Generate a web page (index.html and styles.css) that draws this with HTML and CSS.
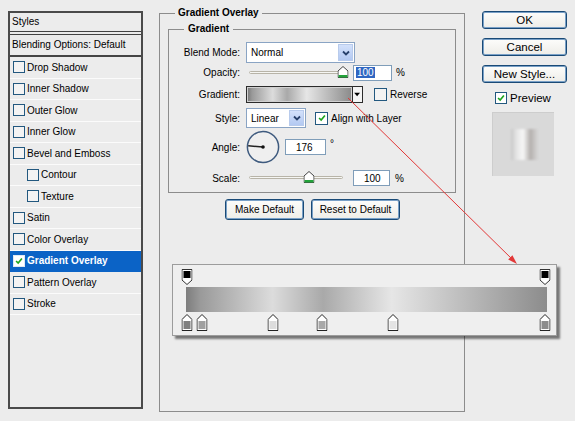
FILE: index.html
```html
<!DOCTYPE html>
<html>
<head>
<meta charset="utf-8">
<link rel="stylesheet" href="styles.css">
</head>
<body>
<div class="dialog">
  <aside class="styles-panel">
    <div class="panel-head">Styles</div>
    <div class="panel-blend">Blending Options: Default</div>
    <ul class="fx-list">
      <li class="fx"><span class="cb"></span>Drop Shadow</li>
      <li class="fx"><span class="cb"></span>Inner Shadow</li>
      <li class="fx"><span class="cb"></span>Outer Glow</li>
      <li class="fx"><span class="cb"></span>Inner Glow</li>
      <li class="fx"><span class="cb"></span>Bevel and Emboss</li>
      <li class="fx sub"><span class="cb"></span>Contour</li>
      <li class="fx sub"><span class="cb"></span>Texture</li>
      <li class="fx"><span class="cb"></span>Satin</li>
      <li class="fx"><span class="cb"></span>Color Overlay</li>
      <li class="fx active"><span class="cb checked"><svg viewBox="0 0 12 12" width="12" height="12"><path d="M2.5 6 L5 8.5 L9.5 3" fill="none" stroke="#1fa51f" stroke-width="2"/></svg></span>Gradient Overlay</li>
      <li class="fx"><span class="cb"></span>Pattern Overlay</li>
      <li class="fx"><span class="cb"></span>Stroke</li>
    </ul>
  </aside>

  <main class="settings">
    <fieldset class="group outer">
      <legend>Gradient Overlay</legend>
      <fieldset class="group inner">
        <legend>Gradient</legend>
        <div class="row r-blend">
          <span class="lbl">Blend Mode:</span>
          <div class="select w-blend"><span>Normal</span><span class="dd"><svg viewBox="0 0 10 10" width="10" height="10"><path d="M2 3.5 L5 6.5 L8 3.5" fill="none" stroke="#27406b" stroke-width="1.8"/></svg></span></div>
        </div>
        <div class="row r-opacity">
          <span class="lbl">Opacity:</span>
          <div class="slider"><span class="track"></span><span class="thumb" style="left:97px"><svg viewBox="0 0 11 12" width="11" height="12"><path d="M0.5 5 L5.5 0.5 L10.5 5 V11.5 H0.5 Z" fill="#fff" stroke="#444"/><rect x="1" y="9" width="9" height="2.5" fill="#22a33a"/></svg></span></div>
          <div class="num w-op"><span class="sel">100</span></div>
          <span class="unit">%</span>
        </div>
        <div class="row r-grad">
          <span class="lbl">Gradient:</span>
          <div class="grad-swatch"><span class="grad-fill"></span></div>
          <span class="grad-dd"><svg viewBox="0 0 8 6" width="7" height="5"><path d="M0 1 H7 L3.5 5 Z" fill="#000"/></svg></span>
          <span class="cb big rev"></span><span class="cb-label">Reverse</span>
        </div>
        <div class="row r-style">
          <span class="lbl">Style:</span>
          <div class="select w-style"><span>Linear</span><span class="dd"><svg viewBox="0 0 10 10" width="10" height="10"><path d="M2 3.5 L5 6.5 L8 3.5" fill="none" stroke="#27406b" stroke-width="1.8"/></svg></span></div>
          <span class="cb big align checked"><svg viewBox="0 0 12 12" width="12" height="12"><path d="M2.5 6 L5 8.5 L9.5 3" fill="none" stroke="#1fa51f" stroke-width="2"/></svg></span><span class="cb-label">Align with Layer</span>
        </div>
        <div class="row r-angle">
          <span class="lbl">Angle:</span>
          <svg class="dial" viewBox="0 0 34 34" width="34" height="34"><circle cx="17" cy="17" r="15.6" fill="#efefef" stroke="#3e5a7e" stroke-width="1.5"/><line x1="17" y1="17" x2="2.2" y2="15.8" stroke="#222" stroke-width="1.5"/><circle cx="17" cy="17" r="1.8" fill="#111"/></svg>
          <div class="num w-angle">176</div>
          <span class="deg">°</span>
        </div>
        <div class="row r-scale">
          <span class="lbl">Scale:</span>
          <div class="slider"><span class="track"></span><span class="thumb" style="left:63px"><svg viewBox="0 0 11 12" width="11" height="12"><path d="M0.5 5 L5.5 0.5 L10.5 5 V11.5 H0.5 Z" fill="#fff" stroke="#444"/><rect x="1" y="9" width="9" height="2.5" fill="#22a33a"/></svg></span></div>
          <div class="num w-scale">100</div>
          <span class="unit u-scale">%</span>
        </div>
      </fieldset>
      <div class="defaults">
        <button class="btn b-make">Make Default</button>
        <button class="btn b-reset">Reset to Default</button>
      </div>
    </fieldset>
  </main>

  <div class="actions">
    <button class="btn act">OK</button>
    <button class="btn act">Cancel</button>
    <button class="btn act">New Style...</button>
    <div class="preview-toggle"><span class="cb checked"><svg viewBox="0 0 12 12" width="12" height="12"><path d="M2.5 6 L5 8.5 L9.5 3" fill="none" stroke="#1fa51f" stroke-width="2"/></svg></span><span>Preview</span></div>
    <div class="preview-box"><span class="preview-swatch"></span></div>
  </div>
</div>

<div class="gradient-editor">
  <div class="ge-track">
    <div class="ge-top">
      <span class="stop-top" style="left:1px"><svg viewBox="0 0 11 16" width="11" height="16"><path d="M0.5 0.5 H10.5 V11 L5.5 15.5 L0.5 11 Z" fill="#fff" stroke="#333"/><rect x="2" y="2" width="7" height="7" fill="#000"/></svg></span>
      <span class="stop-top" style="left:359px"><svg viewBox="0 0 11 16" width="11" height="16"><path d="M0.5 0.5 H10.5 V11 L5.5 15.5 L0.5 11 Z" fill="#fff" stroke="#333"/><rect x="2" y="2" width="7" height="7" fill="#000"/></svg></span>
    </div>
    <div class="ge-bar"></div>
    <div class="ge-bottom">
      <span class="stop-bot" style="left:1px"><svg viewBox="0 0 11 17" width="11" height="17"><path d="M0.5 5.5 L5.5 0.5 L10.5 5.5 V16.5 H0.5 Z" fill="#fff" stroke="#222"/><rect x="2" y="7" width="7" height="8" fill="#7e7e7e"/></svg></span>
      <span class="stop-bot" style="left:16px"><svg viewBox="0 0 11 17" width="11" height="17"><path d="M0.5 5.5 L5.5 0.5 L10.5 5.5 V16.5 H0.5 Z" fill="#fff" stroke="#222"/><rect x="2" y="7" width="7" height="8" fill="#a0a0a0"/></svg></span>
      <span class="stop-bot" style="left:87px"><svg viewBox="0 0 11 17" width="11" height="17"><path d="M0.5 5.5 L5.5 0.5 L10.5 5.5 V16.5 H0.5 Z" fill="#fff" stroke="#222"/><rect x="2" y="7" width="7" height="8" fill="#dcdcdc"/></svg></span>
      <span class="stop-bot" style="left:136px"><svg viewBox="0 0 11 17" width="11" height="17"><path d="M0.5 5.5 L5.5 0.5 L10.5 5.5 V16.5 H0.5 Z" fill="#fff" stroke="#222"/><rect x="2" y="7" width="7" height="8" fill="#a8a8a8"/></svg></span>
      <span class="stop-bot" style="left:207px"><svg viewBox="0 0 11 17" width="11" height="17"><path d="M0.5 5.5 L5.5 0.5 L10.5 5.5 V16.5 H0.5 Z" fill="#fff" stroke="#222"/><rect x="2" y="7" width="7" height="8" fill="#e4e4e4"/></svg></span>
      <span class="stop-bot" style="left:359px"><svg viewBox="0 0 11 17" width="11" height="17"><path d="M0.5 5.5 L5.5 0.5 L10.5 5.5 V16.5 H0.5 Z" fill="#fff" stroke="#222"/><rect x="2" y="7" width="7" height="8" fill="#8c8c8c"/></svg></span>
    </div>
  </div>
</div>

<svg class="arrow" viewBox="0 0 575 421" width="575" height="421">
  <line x1="348" y1="98" x2="513" y2="260" stroke="#e23838" stroke-width="1"/>
  <polygon points="517,264 508.2,259.5 512.4,255.3" fill="#e23838"/>
</svg>
</body>
</html>
```

FILE: styles.css
```css
html, body {
  margin: 0;
  padding: 0;
}
body {
  width: 575px;
  height: 421px;
  background: #ececec;
  font-family: "Liberation Sans", Arial, sans-serif;
  font-size: 10px;
  color: #000;
  position: relative;
  overflow: hidden;
}

.dialog {
  display: flex;
  align-items: flex-start;
  padding-left: 8px;
}

/* Left styles list */
.styles-panel {
  width: 135px;
  height: 398px;
  margin-top: 11px;
  box-sizing: border-box;
  border: 2px solid #4a4a4a;
}
.panel-head {
  height: 18px;
  line-height: 18px;
  padding-left: 2px;
  border-bottom: 4px double #444;
}
.panel-blend {
  height: 20px;
  line-height: 20px;
  padding-left: 2px;
  border-bottom: 2px solid #454545;
}
.fx-list {
  list-style: none;
  margin: 0;
  padding: 0;
}
.fx {
  height: 20.5px;
  border-bottom: 1px solid #fbfbfb;
  display: flex;
  align-items: center;
  gap: 2px;
  padding-left: 3px;
}
.fx.sub {
  padding-left: 17px;
}
.fx.active {
  background: #0b63c6;
  color: #fff;
  font-weight: bold;
  border-bottom-color: #0b63c6;
}
.cb {
  width: 12px;
  height: 12px;
  box-sizing: border-box;
  border: 1px solid #22587f;
  background: #f3f3f3;
  display: inline-flex;
  align-items: center;
  justify-content: center;
  flex: none;
}
.cb svg {
  display: block;
  width: 10px;
  height: 10px;
}
.cb.checked {
  background: #fff;
}
.fx.active .cb {
  border-color: #dfe8f3;
}

/* Middle settings */
.settings {
  margin-left: 16px;
  margin-top: 7px;
}
.group {
  margin: 0;
  border: 1px solid #8c8c8c;
  box-sizing: border-box;
  min-width: 0;
}
.group > legend {
  font-weight: bold;
  line-height: 12px;
  font-size: 10px;
}
.outer {
  width: 306px;
  height: 405px;
  padding: 4px 7px 0 8px;
}
.outer > legend {
  padding: 0 3px;
  margin-left: 7px;
}
.inner {
  width: 288px;
  padding: 7px 0 1px 0;
}
.inner > legend {
  padding: 0 4px;
  margin-left: 15px;
}

.row {
  display: flex;
  align-items: center;
}
.lbl {
  width: 71px;
  margin-right: 6px;
  text-align: right;
  flex: none;
}
.r-blend { height: 21px; }
.r-opacity { height: 19px; }
.r-grad { height: 25px; }
.r-style { height: 22px; }
.r-angle { height: 36px; }
.r-scale { height: 26px; }

.select {
  box-sizing: border-box;
  border: 1px solid #8aa4c4;
  background: #fff;
  display: flex;
  align-items: center;
  justify-content: space-between;
  padding: 1px 1px 1px 4px;
}
.w-blend { width: 109px; height: 21px; }
.w-style { width: 60px; height: 20px; }
.dd {
  width: 15px;
  align-self: stretch;
  background: linear-gradient(#d3e1fb, #b3c9f2);
  border: 1px solid #b8cbec;
  box-sizing: border-box;
  display: flex;
  align-items: center;
  justify-content: center;
}

.slider {
  position: relative;
  width: 104px;
  height: 14px;
  margin-left: 0;
}
.track {
  position: absolute;
  left: 3px;
  right: 7px;
  top: 5px;
  height: 3px;
  box-sizing: border-box;
  border: 1px solid #b8b4a8;
  border-radius: 2px;
  background: #f6f6f3;
}
.thumb {
  position: absolute;
  top: 0;
  transform: translateX(-50%);
  display: block;
  line-height: 0;
}

.num {
  box-sizing: border-box;
  height: 16px;
  border: 1px solid #7f9db9;
  background: #fff;
  display: flex;
  align-items: center;
  padding-left: 2px;
}
.w-op { width: 39px; margin-left: 3px; }
.w-scale { width: 37px; margin-left: 3px; padding-left: 10px; }
.w-angle { width: 41px; margin-left: 5px; padding-left: 10px; }
.sel {
  background: #2f66c2;
  color: #fff;
  padding: 0 1px;
  line-height: 11px;
}
.unit { margin-left: 4px; }
.u-scale { margin-left: 5px; }
.deg { margin-left: 4px; align-self: flex-start; margin-top: 9px; }

.grad-swatch {
  width: 107px;
  height: 17px;
  box-sizing: border-box;
  border: 1px solid #2b2b2b;
  padding: 1px;
  background: #d0d0d0;
}
.grad-fill {
  display: block;
  height: 100%;
  background: linear-gradient(90deg, #7d7d7d 0%, #9a9a9a 4%, #dcdcdc 24%, #a9a9a9 38%, #e6e6e6 57%, #8c8c8c 100%);
}
.grad-dd {
  width: 10px;
  height: 17px;
  box-sizing: border-box;
  border: 1px solid #2b2b2b;
  border-left: none;
  background: #f4f4f4;
  display: flex;
  align-items: center;
  justify-content: center;
}
.cb.big {
  width: 13px;
  height: 13px;
}
.cb.rev { margin-left: 11px; }
.cb.align { margin-left: 9px; }
.cb-label { margin-left: 3px; }

.dial {
  display: block;
  flex: none;
}

.defaults {
  display: flex;
  justify-content: center;
  gap: 7px;
  margin-top: 6px;
}
.btn {
  font-family: "Liberation Sans", Arial, sans-serif;
  font-size: 10px;
  color: #000;
  height: 21px;
  box-sizing: border-box;
  border: 1px solid #1a4a76;
  border-radius: 3px;
  background: linear-gradient(#fdfdfb, #eeede8);
  box-shadow: inset 0 0 0 1px #79a0c7;
  padding: 0;
  margin: 0;
}
.b-make { width: 79px; }
.b-reset { width: 89px; }

/* Right actions */
.actions {
  width: 85px;
  margin-left: 17px;
  margin-top: 11px;
  display: flex;
  flex-direction: column;
}
.btn.act {
  height: 18px;
  font-size: 11.5px;
  margin-bottom: 9px;
}
.preview-toggle {
  display: flex;
  align-items: center;
  gap: 3px;
  margin-left: 13px;
  font-size: 11.5px;
  height: 12px;
}
.preview-box {
  width: 62px;
  height: 64px;
  margin-top: 8px;
  margin-left: 10px;
  background: #d9d9d9;
  box-sizing: border-box;
  border-top: 1px solid #cdcdcd;
  border-left: 1px solid #cdcdcd;
  display: flex;
  align-items: center;
  justify-content: center;
}
.preview-swatch {
  display: block;
  width: 27px;
  height: 31px;
  margin-left: 2px;
  background: linear-gradient(90deg, #c8c8c8 0%, #e4e4e4 20%, #f7f7f7 45%, #b4b0ae 72%, #c9c7c6 88%, #d6d6d6 100%);
  filter: blur(0.8px);
}

/* Gradient editor popup */
.gradient-editor {
  position: absolute;
  left: 172px;
  top: 264px;
  width: 385px;
  height: 72px;
  box-sizing: border-box;
  background: #efefef;
  border: 1px solid #9c9c9c;
  box-shadow: 3px 3px 2px rgba(0, 0, 0, 0.5);
}
.ge-track {
  margin-left: 13px;
  width: 361px;
}
.ge-top {
  position: relative;
  height: 18px;
  margin-top: 4px;
}
.ge-bar {
  height: 25px;
  background: linear-gradient(90deg, #7d7d7d 0%, #9a9a9a 4%, #dcdcdc 24%, #a9a9a9 38%, #e6e6e6 57%, #8c8c8c 100%);
}
.ge-bottom {
  position: relative;
  height: 17px;
  margin-top: 2px;
}
.stop-top, .stop-bot {
  position: absolute;
  top: 0;
  transform: translateX(-50%);
  line-height: 0;
}

.arrow {
  position: absolute;
  left: 0;
  top: 0;
  pointer-events: none;
}
```
